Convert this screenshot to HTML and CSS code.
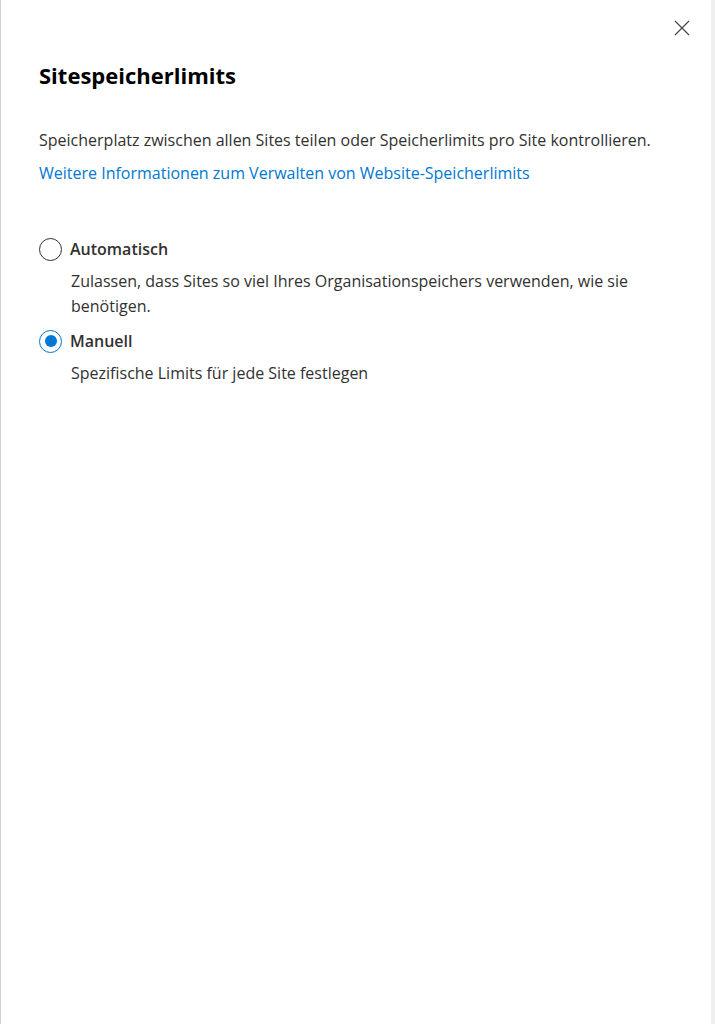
FILE: index.html
```html
<!DOCTYPE html>
<html lang="de">
<head>
    <meta charset="UTF-8">
    <meta name="viewport" content="width=device-width, initial-scale=1.0">
    <title>Sitespeicherlimits</title>
    <link rel="stylesheet" href="styles.css">
</head>
<body>

    <div class="panel">
        <div class="panel-top">
            <button class="close-btn" aria-label="Schließen">
                <svg width="16" height="16" viewBox="0 0 16 16">
                    <path d="M1 1 L15 15 M15 1 L1 15" stroke="#484644" stroke-width="1.2" fill="none"/>
                </svg>
            </button>
        </div>

        <h1 class="title">Sitespeicherlimits</h1>

        <p class="intro">Speicherplatz zwischen allen Sites teilen oder Speicherlimits pro Site kontrollieren.</p>
        <a class="more-link" href="#">Weitere Informationen zum Verwalten von Website-Speicherlimits</a>

        <!-- Storage options -->
        <div class="options">
            <label class="option">
                <span class="radio"></span>
                <span class="option-label">Automatisch</span>
            </label>
            <p class="option-desc">Zulassen, dass Sites so viel Ihres Organisationspeichers verwenden, wie sie benötigen.</p>

            <label class="option checked">
                <span class="radio"></span>
                <span class="option-label">Manuell</span>
            </label>
            <p class="option-desc">Spezifische Limits für jede Site festlegen</p>
        </div>
    </div>

</body>
</html>
```

FILE: styles.css
```css
body {
    margin: 0;
    padding: 0;
    background-color: #ffffff;
    font-family: "Open Sans", "Noto Sans", sans-serif;
    color: #323130;
}

.panel {
    height: 1024px;
    box-sizing: border-box;
    border-left: 1px solid #d2d0ce;
    border-right: 4px solid #efefef;
    padding: 0 39px 0 38px;
}

.panel-top {
    display: flex;
    justify-content: flex-end;
    padding-top: 20px;
    margin-right: -18px;
}

.close-btn {
    background: none;
    border: none;
    padding: 0;
    width: 16px;
    height: 16px;
    cursor: pointer;
}

.close-btn svg {
    display: block;
}

.title {
    margin: 24px 0 0;
    font-size: 22px;
    font-weight: 700;
    line-height: 30px;
    color: #000000;
}

.intro {
    margin: 39px 0 0;
    font-size: 16px;
    line-height: 22px;
}

.more-link {
    display: block;
    margin-top: 11px;
    font-size: 16px;
    line-height: 22px;
    color: #0078d4;
    text-decoration: none;
}

.options {
    margin-top: 53px;
}

.option {
    display: flex;
    align-items: center;
    gap: 8px;
    height: 24px;
}

.radio {
    width: 23px;
    height: 23px;
    box-sizing: border-box;
    border: 1px solid #323130;
    border-radius: 50%;
    display: flex;
    align-items: center;
    justify-content: center;
}

.option.checked .radio {
    border-color: #0078d4;
}

.option.checked .radio::after {
    content: "";
    width: 12px;
    height: 12px;
    border-radius: 50%;
    background-color: #0078d4;
}

.option-label {
    font-size: 16px;
    font-weight: 600;
}

.option-desc {
    margin: 8px 0 10px 32px;
    font-size: 16px;
    line-height: 25px;
}
```
